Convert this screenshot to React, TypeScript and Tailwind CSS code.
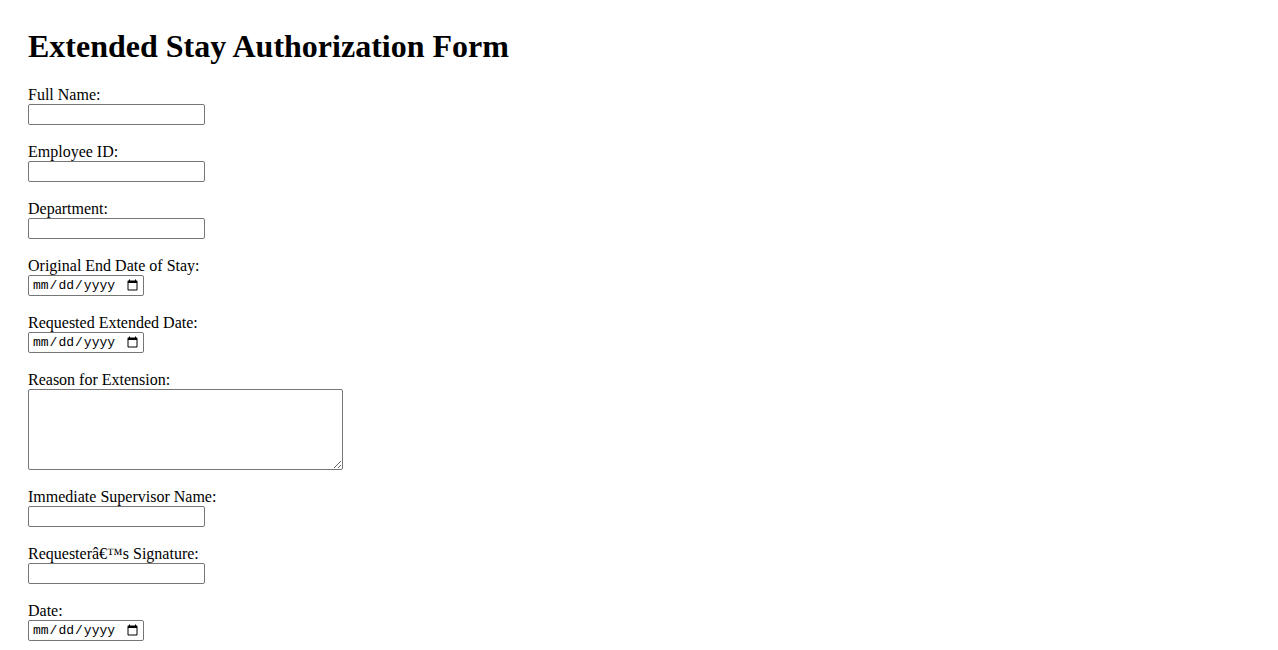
const textField = "block w-[177px] h-[21px] border border-[#767676] rounded-[2px] px-[2px] text-[13px] font-['Liberation_Sans',sans-serif] bg-white";
const dateField = "block w-[116px] h-[21px] border border-[#767676] rounded-[2px] pl-[3px] pr-[2px] text-[13px] font-['Liberation_Mono',monospace] bg-white text-black";

const Field = ({ label, children }: { label: string; children: React.ReactNode }) => (
  <div className="mb-[18px]">
    <label className="block leading-[18px]">{label}</label>
    {children}
  </div>
);

const App = () => {
  return (
    <div className="min-h-screen bg-white text-black pt-[28px] pl-[28px] font-['Liberation_Serif',serif] text-[16px]">
      <h1 className="text-[32px] font-bold leading-[37px] mb-[21px]">
        Extended Stay Authorization Form
      </h1>
      <form>
        <Field label="Full Name:">
          <input type="text" className={textField} />
        </Field>
        <Field label="Employee ID:">
          <input type="text" className={textField} />
        </Field>
        <Field label="Department:">
          <input type="text" className={textField} />
        </Field>
        <Field label="Original End Date of Stay:">
          <input type="date" className={dateField} />
        </Field>
        <Field label="Requested Extended Date:">
          <input type="date" className={dateField} />
        </Field>
        <Field label="Reason for Extension:">
          <textarea className="block w-[315px] h-[81px] border border-[#767676] rounded-[2px] p-[2px] text-[13px] font-['Liberation_Mono',monospace] bg-white" />
        </Field>
        <Field label="Immediate Supervisor Name:">
          <input type="text" className={textField} />
        </Field>
        <Field label="Requesterâ€™s Signature:">
          <input type="text" className={textField} />
        </Field>
        <Field label="Date:">
          <input type="date" className={dateField} />
        </Field>
      </form>
    </div>
  );
};

export default App;
